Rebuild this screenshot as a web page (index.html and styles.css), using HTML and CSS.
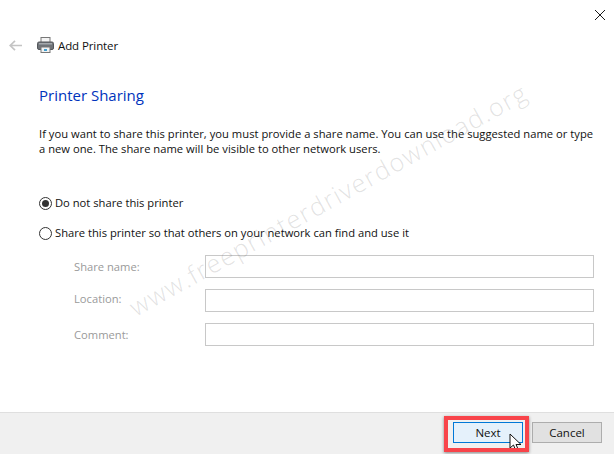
FILE: index.html
```html
<!DOCTYPE html>
<html lang="en">
<head>
<meta charset="utf-8">
<title>Add Printer</title>
<link rel="stylesheet" href="styles.css">
</head>
<body>
<div class="dialog">
  <div class="titlebar">
    <svg class="close" width="10" height="10" viewBox="0 0 10 10"><path d="M0 0L10 10M10 0L0 10" stroke="#1a1a1a" stroke-width="1" fill="none"/></svg>
  </div>
  <header class="nav">
    <svg class="back" width="13" height="11" viewBox="0 0 13 11"><path d="M6 0.8L1.2 5.5L6 10.2M1.2 5.5H13" stroke="#c4c4c4" stroke-width="1.7" fill="none"/></svg>
    <svg class="printer" width="17" height="16" viewBox="0 0 17 16">
      <rect x="4" y="0.5" width="9" height="5" fill="#f4f4f4" stroke="#777"/>
      <rect x="0.5" y="5" width="16" height="7.5" rx="1.5" fill="#6f7378" stroke="#54575b"/>
      <rect x="2" y="6" width="13" height="1.5" fill="#a4a8ac"/>
      <rect x="4" y="10" width="9" height="5.5" fill="#f2f2f2" stroke="#777"/>
      <rect x="7" y="12" width="3" height="2" fill="#3f9fd0"/>
    </svg>
    <span class="nav-title">Add Printer</span>
  </header>
  <main class="content">
    <h1 class="heading">Printer Sharing</h1>
    <p class="intro">If you want to share this printer, you must provide a share name. You can use the suggested name or type<br>a new one. The share name will be visible to other network users.</p>
    <div class="options">
      <div class="option"><span class="radio checked"></span><span>Do not share this printer</span></div>
      <div class="option"><span class="radio"></span><span>Share this printer so that others on your network can find and use it</span></div>
    </div>
    <div class="fields">
      <label class="field-label">Share name:</label><div class="field-input"></div>
      <label class="field-label raised">Location:</label><div class="field-input"></div>
      <label class="field-label">Comment:</label><div class="field-input"></div>
    </div>
  </main>
  <footer class="footer">
    <button class="btn primary">Next</button>
    <button class="btn">Cancel</button>
  </footer>
  <div class="watermark">www.freeprinterdriverdownload.org</div>
  <svg class="cursor" width="14" height="21" viewBox="0 0 14 21"><path d="M1 1V15L4.5 12L7 18L9.5 17L7 11.5H12Z" fill="#fff" stroke="#111" stroke-width="1"/></svg>
  <div class="highlight"></div>
</div>
</body>
</html>
```
FILE: styles.css
```css
* { box-sizing: border-box; }
html, body { margin: 0; padding: 0; }
body { font-family: "Open Sans", "Noto Sans", sans-serif; font-size: 11.5px; color: #111; background: #fff; }
.dialog { position: relative; width: 614px; height: 454px; display: flex; flex-direction: column; overflow: hidden; background: #fff; }
.titlebar { height: 32px; display: flex; justify-content: flex-end; align-items: flex-start; padding: 10px 9px 0 0; flex: none; }
.nav { height: 26px; display: flex; align-items: center; padding-left: 9px; flex: none; }
.printer { margin-left: 15px; }
.nav-title { margin-left: 4px; font-size: 11.5px; letter-spacing: -0.1px; }
.content { flex: 1; padding: 0 20px 0 39px; }
.heading { margin: 27px 0 0; font-size: 15px; line-height: 20px; font-weight: 400; color: #0033bc; }
.intro { margin: 21px 0 0; line-height: 15px; font-size: 11.2px; letter-spacing: 0.02px; }
.options { margin-top: 39px; display: flex; flex-direction: column; gap: 15px; }
.option { display: flex; align-items: center; gap: 3px; height: 15px; font-size: 11.2px; letter-spacing: 0; }
.radio { width: 13px; height: 13px; border: 1px solid #333; border-radius: 50%; background: #fff; display: block; flex: none; position: relative; top: 0.5px; }
.radio.checked::after { content: ""; position: absolute; left: 2px; top: 2px; width: 7px; height: 7px; border-radius: 50%; background: #333; }
.fields { margin: 15px 0 0 35px; display: grid; grid-template-columns: 131px 389px; grid-auto-rows: 23px; row-gap: 11px; align-items: center; }
.field-label { color: #9a9a9a; font-size: 11.2px; letter-spacing: 0; }
.field-label.raised { margin-bottom: 4px; }
.field-input { height: 23px; border: 1px solid #c8c8c8; background: #fff; }
.footer { height: 42px; flex: none; background: #f0f0f0; border-top: 1px solid #dfdfdf; display: flex; justify-content: flex-end; align-items: flex-start; gap: 9px; padding: 9px 12px 0 0; }
.btn { width: 70px; height: 21px; padding: 0; border: 1px solid #adadad; background: #e1e1e1; font: inherit; font-size: 11.5px; color: #111; }
.btn.primary { background: #e5f1fb; border-color: #0078d7; }
.watermark { position: absolute; left: 88px; top: 182px; width: 480px; text-align: center; font-size: 25px; font-weight: 300; letter-spacing: 1.5px; color: rgba(110,110,110,0.2); transform: rotate(-29deg); pointer-events: none; white-space: nowrap; }
.highlight { position: absolute; left: 444px; top: 416px; width: 85px; height: 36px; border: 4px solid #f8444a; box-shadow: 0 1px 3px rgba(0,0,0,0.45); }
.cursor { position: absolute; left: 509px; top: 433px; }
```
